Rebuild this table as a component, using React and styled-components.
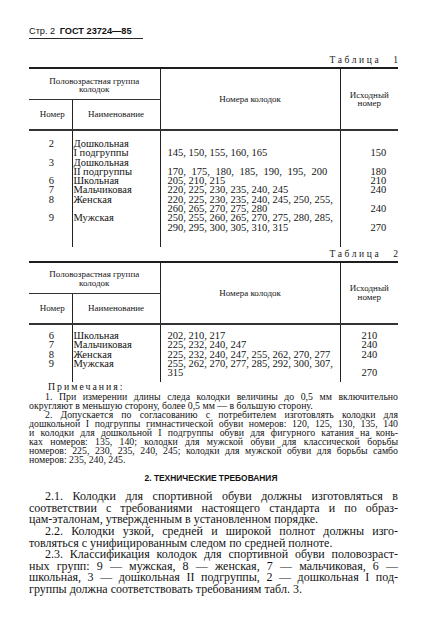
import React from 'react'
import styled, { createGlobalStyle } from 'styled-components';

const GlobalStyle = createGlobalStyle`
    html, body {
        margin: 0;
        padding: 0;
        background: #ffffff;
    }
    body {
        color: #141414;
        font-family: "Liberation Serif", "Times New Roman", serif;
    }
`;

const table1 = [
    { num: '2', name: ['Дошкольная', 'I подгруппы'], values: ['145, 150, 155, 160, 165'], base: '150' },
    { num: '3', name: ['Дошкольная', 'II подгруппы'], values: ['170, 175, 180, 185, 190, 195, 200'], base: '180', wide: true },
    { num: '6', name: ['Школьная'], values: ['205, 210, 215'], base: '210' },
    { num: '7', name: ['Мальчиковая'], values: ['220, 225, 230, 235, 240, 245'], base: '240' },
    { num: '8', name: ['Женская'], values: ['220, 225, 230, 235, 240, 245, 250, 255,', '260, 265, 270, 275, 280'], base: '240' },
    { num: '9', name: ['Мужская'], values: ['250, 255, 260, 265, 270, 275, 280, 285,', '290, 295, 300, 305, 310, 315'], base: '270' },
];

const table2 = [
    { num: '6', name: ['Школьная'], values: ['202, 210, 217'], base: '210' },
    { num: '7', name: ['Мальчиковая'], values: ['225, 232, 240, 247'], base: '240' },
    { num: '8', name: ['Женская'], values: ['225, 232, 240, 247, 255, 262, 270, 277'], base: '240' },
    { num: '9', name: ['Мужская'], values: ['255, 262, 270, 277, 285, 292, 300, 307,', '315'], base: '270' },
];

const notes = [
    [
        '1. При измерении длины следа колодки величины до 0,5 мм включительно',
        'округляют в меньшую сторону, более 0,5 мм — в большую сторону.',
    ],
    [
        '2. Допускается по согласованию с потребителем изготовлять колодки для',
        'дошкольной I подгруппы гимнастической обуви номеров: 120, 125, 130, 135, 140',
        'и колодки для дошкольной I подгруппы обуви для фигурного катания на конь-',
        'ках номеров: 135, 140; колодки для мужской обуви для классической борьбы',
        'номеров: 225, 230, 235, 240, 245; колодки для мужской обуви для борьбы самбо',
        'номеров: 235, 240, 245.',
    ],
];

const requirements = [
    [
        '2.1. Колодки для спортивной обуви должны изготовляться в',
        'соответствии с требованиями настоящего стандарта и по образ-',
        'цам-эталонам, утвержденным в установленном порядке.',
    ],
    [
        '2.2. Колодки узкой, средней и широкой полнот должны изго-',
        'товляться с унифицированным следом по средней полноте.',
    ],
    [
        '2.3. Классификация колодок для спортивной обуви половозраст-',
        'ных групп: 9 — мужская, 8 — женская, 7 — мальчиковая, 6 —',
        'школьная, 3 — дошкольная II подгруппы, 2 — дошкольная I под-',
        'группы должна соответствовать требованиям табл. 3.',
    ],
];

function SizeTable({ rows, baseShift, lead, tail }) {
    return (
        <Table $lead={lead} $tail={tail}>
            <colgroup>
                <col style={{ width: 43 }} />
                <col style={{ width: 88 }} />
                <col style={{ width: 180 }} />
                <col style={{ width: 58 }} />
            </colgroup>
            <thead>
                <tr>
                    <GroupHead colSpan={2}>Половозрастная группа<br />колодок</GroupHead>
                    <Head rowSpan={2}>Номера колодок</Head>
                    <Head rowSpan={2} $last>Исходный<br />номер</Head>
                </tr>
                <tr>
                    <SubHead>Номер</SubHead>
                    <SubHead>Наименование</SubHead>
                </tr>
            </thead>
            <tbody>
                {rows.map((r) => (
                    <tr key={r.num}>
                        <NumCell>{r.num}</NumCell>
                        <NameCell>{r.name.map((n) => <Line key={n}>{n}</Line>)}</NameCell>
                        <ValueCell $wide={r.wide}>{r.values.map((v) => <Line key={v}>{v}</Line>)}</ValueCell>
                        <BaseCell $shift={baseShift}>{r.base}</BaseCell>
                    </tr>
                ))}
            </tbody>
        </Table>
    )
}

function TextBlock({ paragraphs }) {
    return paragraphs.map((p, i) => (
        <Paragraph key={i}>
            {p.map((l, j) => (
                <JustLine key={j} $last={j === p.length - 1}>{l}</JustLine>
            ))}
        </Paragraph>
    ))
}

function App() {
    return (
        <Page>
            <GlobalStyle />
            <PageHeader>
                Стр. 2 <b>ГОСТ 23724—85</b>
            </PageHeader>

            <Caption>Таблица<Num>1</Num></Caption>
            <SizeTable rows={table1} baseShift={18} lead={8} tail={15} />

            <Caption $second>Таблица<Num>2</Num></Caption>
            <SizeTable rows={table2} baseShift={0} lead={6} tail={5} />

            <Notes>
                <NotesTitle>Примечания:</NotesTitle>
                <TextBlock paragraphs={notes} />
            </Notes>

            <SectionTitle>2. Технические требования</SectionTitle>

            <Requirements>
                <TextBlock paragraphs={requirements} />
            </Requirements>
        </Page>
    )
}

export default App;

const Page = styled.div`
    width: 442px;
    box-sizing: border-box;
    padding: 26px 44px 30px 29px;
`;

const PageHeader = styled.div`
    width: 114px;
    box-sizing: border-box;
    font-family: "Liberation Sans", Arial, sans-serif;
    font-size: 9.2px;
    line-height: 10px;
    padding-bottom: 2px;
    border-bottom: 1.5px solid #2a2a2a;
    color: #111;
    white-space: nowrap;
    b {
        font-weight: bold;
        margin-left: 2px;
    }
`;

const Caption = styled.div`
    margin-top: ${props => props.$second ? '2px' : '16px'};
    margin-bottom: 2px;
    text-align: right;
    font-size: 9.5px;
    line-height: 10px;
    letter-spacing: 2.6px;
    color: #1a1a1a;
`;

const Num = styled.span`
    display: inline-block;
    margin-left: 12px;
    letter-spacing: 0;
`;

const Table = styled.table`
    width: 369px;
    border-collapse: collapse;
    table-layout: fixed;
    border-top: 2px solid #1e1e1e;
    font-size: 10.5px;
    line-height: 9.3px;
    tbody tr:first-child td {
        padding-top: ${props => props.$lead}px;
    }
    tbody tr:last-child td {
        padding-bottom: ${props => props.$tail}px;
    }
`;

const Head = styled.th`
    font-weight: normal;
    font-size: 9px;
    line-height: 8.5px;
    color: #151515;
    text-align: center;
    vertical-align: middle;
    padding: 0;
    border-right: ${props => props.$last ? 'none' : '1px solid #222'};
    border-bottom: 2px solid #333;
`;

const GroupHead = styled(Head)`
    height: 28px;
    border-bottom: 1px solid #333;
    padding-top: 2px;
`;

const SubHead = styled(Head)`
    height: 29px;
    &:first-child {
        padding-left: 4px;
    }
`;

const Cell = styled.td`
    padding: 0;
    white-space: nowrap;
    border-right: 1px solid #222;
`;

const NumCell = styled(Cell)`
    text-align: center;
    vertical-align: top;
    padding-left: 2px;
`;

const NameCell = styled(Cell)`
    text-align: left;
    vertical-align: top;
    padding-left: 1px;
`;

const ValueCell = styled(Cell)`
    vertical-align: bottom;
    padding-left: 7px;
    word-spacing: ${props => props.$wide ? '3px' : '0'};
`;

const BaseCell = styled(Cell)`
    border-right: none;
    text-align: center;
    vertical-align: bottom;
    padding-left: ${props => props.$shift}px;
`;

const Line = styled.div``;

const Notes = styled.div`
    margin-top: 0;
    font-size: 9.8px;
    line-height: 9.1px;
`;

const NotesTitle = styled.div`
    padding-left: 19px;
    letter-spacing: 2px;
`;

const Paragraph = styled.div`
    & > div:first-child {
        text-indent: 16px;
    }
`;

const JustLine = styled.div`
    text-align: justify;
    text-align-last: ${props => props.$last ? 'left' : 'justify'};
`;

const SectionTitle = styled.div`
    margin-top: 9px;
    text-align: center;
    font-family: "Liberation Sans", Arial, sans-serif;
    font-weight: bold;
    font-size: 8.4px;
    line-height: 10px;
    text-transform: uppercase;
    padding-right: 5px;
    color: #111;
`;

const Requirements = styled.div`
    margin-top: 8px;
    font-size: 12px;
    line-height: 11.6px;
`;
